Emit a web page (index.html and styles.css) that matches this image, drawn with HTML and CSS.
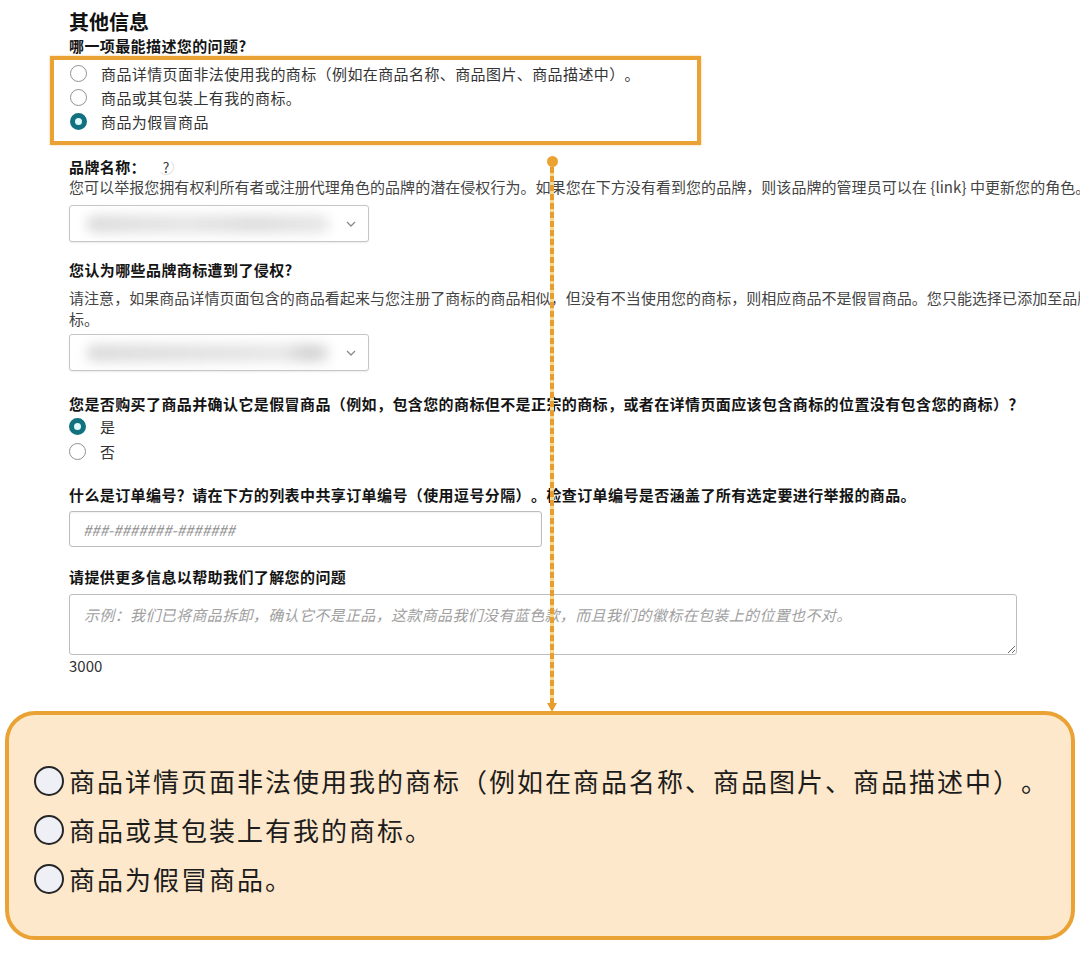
FILE: index.html
```html
<!DOCTYPE html>
<html lang="zh-CN">
<head>
<meta charset="utf-8">
<title>其他信息</title>
<link rel="stylesheet" href="styles.css">
</head>
<body>
<div class="page">
  <div class="form">
    <h2 class="title">其他信息</h2>
    <div class="label q1">哪一项最能描述您的问题?</div>
    <div class="highlight">
      <div class="radio-row"><span class="radio"></span><span>商品详情页面非法使用我的商标（例如在商品名称、商品图片、商品描述中）。</span></div>
      <div class="radio-row"><span class="radio"></span><span>商品或其包装上有我的商标。</span></div>
      <div class="radio-row"><span class="radio on"></span><span>商品为假冒商品</span></div>
    </div>

    <div class="label brand-label">品牌名称：<span class="help">?</span></div>
    <div class="desc">您可以举报您拥有权利所有者或注册代理角色的品牌的潜在侵权行为。如果您在下方没有看到您的品牌，则该品牌的管理员可以在 {link} 中更新您的角色。</div>
    <div class="select">
      <div class="blur"></div>
      <svg class="chev" viewBox="0 0 10 6"><path d="M1 1 L5 5 L9 1" fill="none" stroke="#8a8a8a" stroke-width="1.3"/></svg>
    </div>

    <div class="label infringe-label">您认为哪些品牌商标遭到了侵权?</div>
    <div class="desc desc-2">请注意，如果商品详情页面包含的商品看起来与您注册了商标的商品相似，但没有不当使用您的商标，则相应商品不是假冒商品。您只能选择已添加至品牌注册的商</div>
    <div class="desc desc-3">标。</div>
    <div class="select select-2">
      <div class="blur blur-2"></div>
      <svg class="chev" viewBox="0 0 10 6"><path d="M1 1 L5 5 L9 1" fill="none" stroke="#8a8a8a" stroke-width="1.3"/></svg>
    </div>

    <div class="label purchase-label">您是否购买了商品并确认它是假冒商品（例如，包含您的商标但不是正宗的商标，或者在详情页面应该包含商标的位置没有包含您的商标）？</div>
    <div class="yn">
      <div class="radio-row yn-row"><span class="radio on"></span><span>是</span></div>
      <div class="radio-row yn-row"><span class="radio"></span><span>否</span></div>
    </div>

    <div class="label order-label">什么是订单编号？请在下方的列表中共享订单编号（使用逗号分隔）。检查订单编号是否涵盖了所有选定要进行举报的商品。</div>
    <input class="order-input" type="text" placeholder="###-#######-#######">

    <div class="label more-label">请提供更多信息以帮助我们了解您的问题</div>
    <textarea class="more-text" placeholder="示例：我们已将商品拆卸，确认它不是正品，这款商品我们没有蓝色款，而且我们的徽标在包装上的位置也不对。"></textarea>
    <div class="count">3000</div>
  </div>

  <div class="callout">
    <div class="callout-row"><span class="big-radio"></span><span>商品详情页面非法使用我的商标（例如在商品名称、商品图片、商品描述中）。</span></div>
    <div class="callout-row"><span class="big-radio"></span><span>商品或其包装上有我的商标。</span></div>
    <div class="callout-row"><span class="big-radio"></span><span>商品为假冒商品。</span></div>
  </div>

  <div class="connector">
    <span class="dot"></span>
    <span class="dash"></span>
    <span class="arrow"></span>
  </div>
</div>
</body>
</html>
```

FILE: styles.css
```css
html, body {
  margin: 0;
  padding: 0;
}

body {
  width: 1080px;
  height: 960px;
  overflow: hidden;
  background: #ffffff;
  font-family: "Noto Sans CJK SC", "Noto Sans", "Liberation Sans", sans-serif;
  font-size: 15px;
  color: #333333;
  text-spacing-trim: space-all;
}

.page {
  position: relative;
  padding-top: 10px;
}

.form {
  padding-left: 69px;
}

.title {
  margin: 0;
  font-size: 20px;
  line-height: 24px;
  font-weight: 700;
  color: #111111;
}

.label {
  font-size: 15px;
  line-height: 20px;
  font-weight: 700;
  color: #141414;
  white-space: nowrap;
  letter-spacing: 0.4px;
}

.q1 {
  margin-top: 2px;
}

.highlight {
  margin-left: -19px;
  width: 651px;
  box-sizing: border-box;
  border: 4px solid #e9a233;
  padding: 1px 0 8px 16px;
  box-shadow: 0 0 2px rgba(233, 162, 51, 0.6);
}

.radio-row {
  display: flex;
  align-items: center;
  gap: 14px;
  height: 24px;
  font-size: 15px;
  color: #333333;
  white-space: nowrap;
  letter-spacing: 0.4px;
}

.radio {
  flex: none;
  width: 17px;
  height: 17px;
  box-sizing: border-box;
  border: 1px solid #8e9196;
  border-radius: 50%;
  background: #ffffff;
}

.radio.on {
  border: 5px solid #12717e;
  background: #dff8fb;
}

.brand-label {
  margin-top: 12px;
  display: flex;
  align-items: center;
}

.help {
  margin-left: 12px;
  width: 16px;
  height: 16px;
  box-sizing: border-box;
  border: 1px solid #e0e0e0;
  border-left-color: transparent;
  border-top-color: transparent;
  border-radius: 50%;
  display: inline-flex;
  align-items: center;
  justify-content: center;
  font-size: 14px;
  font-weight: 400;
  color: #3a3a3a;
  line-height: 1;
  letter-spacing: 0;
}

.desc {
  font-size: 15px;
  line-height: 20px;
  white-space: nowrap;
  color: #444444;
  letter-spacing: 0.05px;
}

.select {
  margin-top: 8px;
  width: 300px;
  height: 37px;
  box-sizing: border-box;
  border: 1px solid #c6c6c6;
  border-radius: 3px;
  box-shadow: 0 1px 2px rgba(0, 0, 0, 0.08);
  background: #ffffff;
  display: flex;
  align-items: center;
  padding: 0 12px 0 16px;
  gap: 16px;
}

.blur {
  flex: 1;
  height: 18px;
  border-radius: 9px;
  background: linear-gradient(90deg, #dcdcdc, #e6e6e6 40%, #dedede 70%, #e8e8e8);
  filter: blur(6px);
}

.blur-2 {
  background: linear-gradient(90deg, #dcdcdc, #e4e4e4 60%, #e8e8e8 80%, #d2d2d2 92%, #e4e4e4);
}

.chev {
  flex: none;
  width: 10px;
  height: 6px;
}

.infringe-label {
  margin-top: 18px;
}

.desc-2 {
  margin-top: 7px;
  line-height: 21px;
}

.desc-3 {
  line-height: 21px;
}

.select-2 {
  margin-top: 5px;
}

.purchase-label {
  margin-top: 23px;
}

.yn-row {
  height: 25px;
}

.order-label {
  margin-top: 21px;
}

.order-input {
  display: block;
  margin-top: 6px;
  width: 473px;
  height: 36px;
  box-sizing: border-box;
  border: 1px solid #bdbdbd;
  border-radius: 3px;
  box-shadow: inset 0 1px 2px rgba(0, 0, 0, 0.06);
  padding: 0 13px;
  font-family: "Noto Sans CJK SC", "Noto Sans", sans-serif;
  font-size: 15px;
  outline: none;
}

.order-input::placeholder {
  color: #8f8f8f;
  font-style: italic;
}

.more-label {
  margin-top: 20px;
}

.more-text {
  display: block;
  margin-top: 7px;
  width: 948px;
  height: 61px;
  box-sizing: border-box;
  border: 1px solid #bdbdbd;
  border-radius: 3px;
  padding: 9px 14px;
  font-family: "Noto Sans CJK SC", "Noto Sans", sans-serif;
  font-size: 15px;
  line-height: 22px;
  letter-spacing: 0.35px;
  resize: both;
  outline: none;
  text-spacing-trim: space-all;
}

.more-text::placeholder {
  color: #a0a0a0;
  font-style: italic;
}

.count {
  margin-top: 1px;
  font-size: 15px;
  line-height: 20px;
  color: #333333;
}

.callout {
  margin: 35px 0 0 5px;
  width: 1070px;
  height: 229px;
  box-sizing: border-box;
  border: 4px solid #e9a233;
  border-radius: 30px;
  background: #fde8cb;
  padding: 41px 0 0 25px;
}

.callout-row {
  display: flex;
  align-items: center;
  height: 49px;
  font-size: 26px;
  letter-spacing: 2px;
  color: #1c1c1c;
  white-space: nowrap;
}

.big-radio {
  flex: none;
  width: 30px;
  height: 30px;
  box-sizing: border-box;
  border: 2px solid #262626;
  border-radius: 50%;
  background: #eef0f6;
  margin-right: 5px;
}

.connector {
  position: absolute;
  left: 546px;
  top: 156px;
  width: 12px;
  height: 556px;
  display: flex;
  flex-direction: column;
  align-items: center;
}

.dot {
  flex: none;
  width: 11px;
  height: 11px;
  border-radius: 50%;
  background: #eba232;
}

.dash {
  flex: 1;
  width: 4px;
  background: repeating-linear-gradient(to bottom, #e79e2e 0 6px, #f6d98e 6px 9px);
}

.arrow {
  flex: none;
  width: 0;
  height: 0;
  border-left: 5px solid transparent;
  border-right: 5px solid transparent;
  border-top: 9px solid #e79e2e;
}
```
